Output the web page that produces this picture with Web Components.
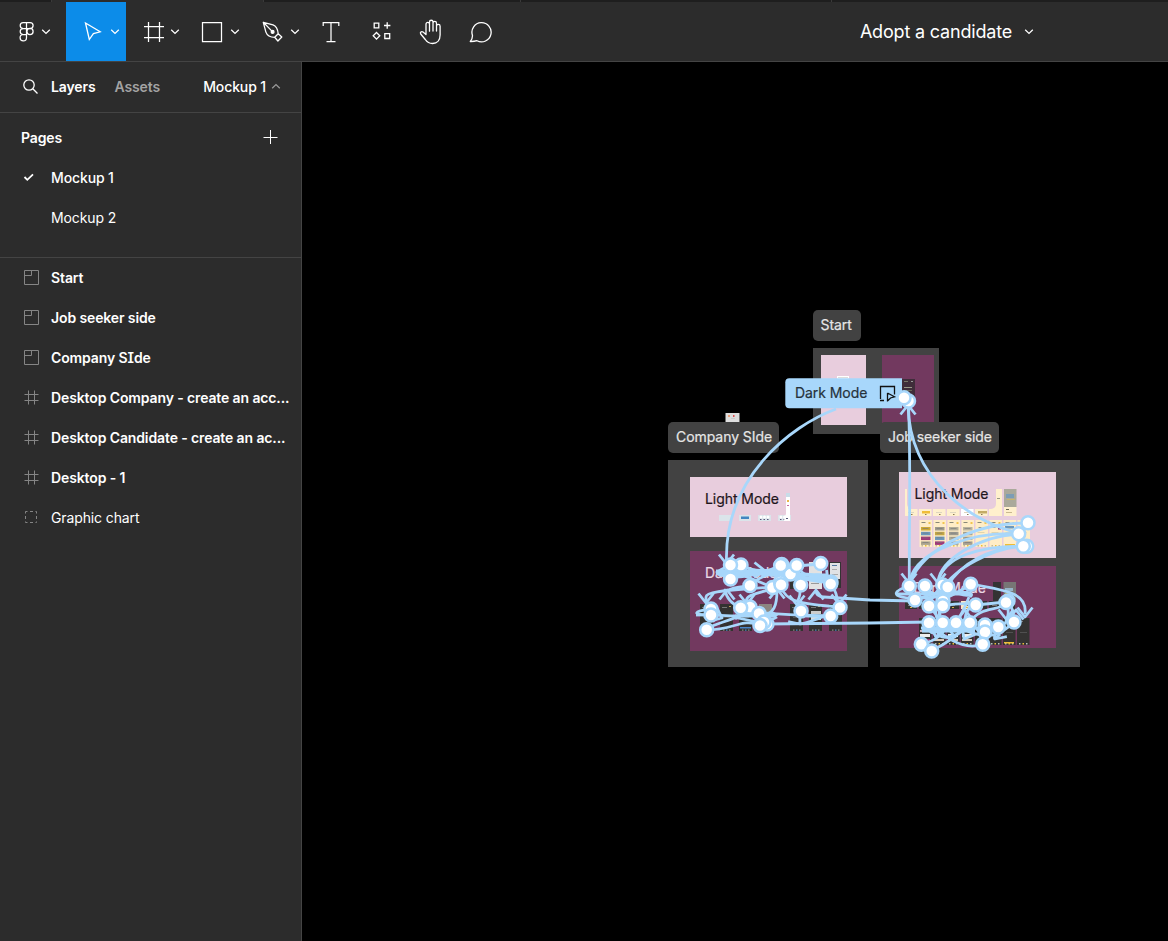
<!DOCTYPE html>
<html lang="en">
<head>
<meta charset="utf-8">
<title>Adopt a candidate</title>
<style>
html,body{margin:0;height:100%;overflow:hidden;background:#000}
body{font-family:Inter,"Liberation Sans",sans-serif;color:#fff}
</style>
</head>
<body>
<design-app></design-app>
<script>
const chev = (c='#fff') => `<svg class="chev" width="10" height="6" viewBox="0 0 10 6" fill="none" stroke="${c}" stroke-width="1.25"><path d="M1.2 .8 5 4.5 8.8 .8"/></svg>`;
const define = (name, html, after) => customElements.define(name, class extends HTMLElement {
  connectedCallback() {
    if (this.shadowRoot) return;
    this.attachShadow({mode:'open'}).innerHTML = typeof html === 'function' ? html(this) : html;
    if (after) after(this);
  }
});

const icons = {
  figma: '<svg width="16" height="22" viewBox="0 0 16 22" fill="none" stroke="#fff" stroke-width="1.25"><path d="M7.5 1.5H4.2a3 3 0 0 0 0 6h3.3zM7.5 1.5h3.6a3 3 0 0 1 0 6H7.5zM7.5 7.5H4.2a3 3 0 0 0 0 6h3.3zM7.5 13.5H4.2a3.2 3.2 0 1 0 3.3 3.2z"/><circle cx="11" cy="10.5" r="3.1"/></svg>',
  move: '<svg width="18" height="22" viewBox="0 0 18 22" fill="none" stroke="#fff" stroke-width="1.3"><path d="M1.5 2 16.2 10.8 9.4 12.6 5.3 18.5z"/></svg>',
  frame: '<svg width="22" height="22" viewBox="0 0 22 22" fill="none" stroke="#fff" stroke-width="1.25"><path d="M5.5 1v20M16.5 1v20M1 5.5h20M1 16.5h20"/></svg>',
  rect: '<svg width="22" height="22" viewBox="0 0 22 22" fill="none" stroke="#fff" stroke-width="1.25"><path d="M1.5 1.5h19v19h-19z"/></svg>',
  pen: '<svg width="22" height="22" viewBox="0 0 22 22" fill="none" stroke="#fff" stroke-width="1.3" stroke-linejoin="round"><path d="M1.3 1.3 11 3.8q4.5 1.5 5.2 8.9l-3.5 3.6q-7 0-8.8-5.2zM1.3 1.3l8.4 8.6M16.2 12.7l3.6 3.3-3.9 4-3.2-3.7"/><circle cx="10.6" cy="10.9" r="1.4" fill="#fff"/></svg>',
  text: '<svg width="18" height="22" viewBox="0 0 18 22" fill="none" stroke="#fff" stroke-width="1.25"><path d="M1.2 5V1.5h15.6V5M9 1.5v19M4.5 20.5h9"/></svg>',
  comp: '<svg width="20" height="22" viewBox="0 0 20 22" fill="none" stroke="#fff" stroke-width="1.3"><path d="M2.2 2.2h4.6v4.6H2.2zM12 4.500h6.4M15.2 1.3v6.4M4.5 11.5l3.3 3.3-3.3 3.3-3.3-3.3zM12.8 12.6h4.9v4.9h-4.9z"/></svg>',
  hand: '<svg width="24" height="26" viewBox="0 0 24 26" fill="none" stroke="#fff" stroke-width="1.3" stroke-linejoin="round" stroke-linecap="round"><path d="M7 15.3V5.2a1.75 1.75 0 0 1 3.5 0v7M10.500 12V3a1.750 1.750 0 0 1 3.5 0v9M14 12V4.200a1.750 1.750 0 0 1 3.500 0V12M17.500 12V7.200a1.750 1.750 0 0 1 3.600 0V16c0 5-2.800 8.500-7.500 8.500-4.300 0-5.700-1.600-7.300-4L1.700 15c-1-1.500.8-3.200 2.300-2L7 15.500"/></svg>',
  comment: '<svg width="24" height="22" viewBox="0 0 24 22" fill="none" stroke="#fff" stroke-width="1.3" stroke-linejoin="round"><path d="M1.300 20.500q2.500-3 2.100-6.300A9.600 9.600 0 1 1 8 19.700q-3 .9-6.700.8z"/></svg>'
};

define('tool-button', el => `
<style>
:host{display:flex;box-sizing:border-box;height:59px;padding-top:1px;flex:none;align-items:center;justify-content:center;width:${el.getAttribute('w')}px;gap:${el.getAttribute('gap')||6}px}
:host([active]){background:#0c8ce9;padding-left:11px}
:host([icon=figma]){padding-left:3px}
svg{display:block;flex:none}
</style>${icons[el.getAttribute('icon')]}${el.hasAttribute('menu') ? chev() : ''}`);

define('top-bar', `
<style>
:host{display:block;height:62px;box-sizing:border-box;background:#2c2c2c;border-bottom:1px solid #444}
.tabs{height:2px;background:#1e1e1e;display:flex}
.tabs i{box-sizing:border-box;height:2px;border-right:1px solid #3a3a3a}
.bar{display:flex;height:59px}
.tools{display:flex;width:511px;flex:none}
.title{flex:1;display:flex;justify-content:center;align-items:center;gap:12px;font-size:18px;padding-left:225px;padding-right:10px;white-space:nowrap;letter-spacing:-.18px}
</style>
<div class="tabs"><i style="width:52px"></i><i style="width:212px;background:#2c2c2c"></i><i style="width:257px"></i><i style="width:311px"></i></div>
<div class="bar"><div class="tools">
<tool-button icon="figma" w="66" gap="6" menu></tool-button>
<tool-button icon="move" w="60" gap="8" menu active></tool-button>
<tool-button icon="frame" w="70" gap="5" menu></tool-button>
<tool-button icon="rect" w="49" gap="7" menu></tool-button>
<tool-button icon="pen" w="72" gap="6" menu></tool-button>
<tool-button icon="text" w="27"></tool-button>
<tool-button icon="comp" w="75"></tool-button>
<tool-button icon="hand" w="24"></tool-button>
<tool-button icon="comment" w="76"></tool-button>
</div><div class="title"><span>Adopt a candidate</span>${chev()}</div></div>`);

const rowIcons = {
  check:'<path d="M4.500 8 7.300 10.800 13 5.400" stroke="#fff" stroke-width="1.8" transform="translate(-3 0)"/>',
  section:'<path d="M1.500 1.500h14v14h-14zM1.500 6.500h7v-5"/>',
  frame:'<path d="M5.500 1.500v14M11.500 1.500v14M1.500 5.500h14M1.500 11.500h14"/>',
  group:'<path d="M2.500 4.500V2.500h2M7 2.500h3M12.500 2.500h1v2M13.500 7v3M13.500 12.500v1h-1M10 13.500H7M4.500 13.500h-2v-1M2.500 10V7"/>',
  none:''
};
define('list-row', el => `
<style>
:host{display:flex;height:40px;box-sizing:border-box;padding-bottom:2px;align-items:center;padding-left:23px;gap:11px;font-size:14px;font-weight:400;color:#fff;white-space:nowrap}
:host([bold]){font-weight:600}
:host([medium]){font-weight:500}
svg{flex:none}
span{letter-spacing:-.12px}
::slotted(i){font-style:normal;font-feature-settings:"cv08"}
</style>
<svg width="17" height="17" viewBox="0 0 17 17" fill="none" stroke="#858585">${rowIcons[el.getAttribute('icon')]}</svg><span><slot></slot></span>`);

define('side-panel', `
<style>
:host{display:flex;flex-direction:column;background:#2c2c2c;border-right:1px solid #444;font-size:14px;letter-spacing:-.12px}
header{height:50px;box-sizing:border-box;height:51px;padding:0 20px 2px 22px;display:flex;align-items:center;border-bottom:1px solid #444;font-weight:600}
header svg{flex:none}
.assets{color:#a3a3a3;margin-left:19px}
.layers{margin-left:12px}
.page{margin-left:auto;font-weight:500;display:flex;align-items:center;gap:5px}
.page svg{transform:scaleY(-1)}
.pages{height:144px;border-bottom:1px solid #444}
.head{height:50px;box-sizing:border-box;display:flex;justify-content:space-between;align-items:center;padding:0 22px 2px 21px;font-weight:600}
.pages list-row:first-of-type{margin-top:-5px}
</style>
<header><svg width="17" height="17" viewBox="0 0 17 17" fill="none" stroke="#fff" stroke-width="1.300"><circle cx="7" cy="7" r="5.200"/><path d="m10.800 10.800 4.700 4.700"/></svg><span class="layers">Layers</span><span class="assets">Assets</span><span class="page"><span>Mockup 1</span>${chev('#999')}</span></header>
<div class="pages"><div class="head"><span>Pages</span><svg width="16" height="16" viewBox="0 0 16 16" stroke="#fff"><path d="M7.500 1v14M.500 8.500h14"/></svg></div>
<list-row icon="check" medium>Mockup 1</list-row>
<list-row icon="none">Mockup 2</list-row></div>
<list-row icon="section" bold>Start</list-row>
<list-row icon="section" bold>Job seeker side</list-row>
<list-row icon="section" bold>Company S<i>I</i>de</list-row>
<list-row icon="frame" bold>Desktop Company - create an acc...</list-row>
<list-row icon="frame" bold>Desktop Candidate - create an ac...</list-row>
<list-row icon="frame" bold>Desktop - 1</list-row>
<list-row icon="group">Graphic chart</list-row>`);

/* A rectangle on the free canvas; box="x y width height" in window pixels. */
define('canvas-box', el => {
  const [x,y,w,h] = el.getAttribute('box').split(' ').map(Number);
  return `<style>:host{position:absolute;box-sizing:border-box;left:${x-302}px;top:${y-62}px;width:${w}px;height:${h}px;background:${el.getAttribute('fill')||'none'};border-radius:${el.getAttribute('r')||0}px;display:flex;align-items:center;padding-left:${el.getAttribute('pad')||0}px;padding-bottom:1.5px;font-size:14px;white-space:nowrap;color:${el.getAttribute('ink')||'#e6e6e6'};-webkit-text-stroke:.2px;letter-spacing:-.06px}</style><slot></slot>`;
});

const R = (x,y,w,h,f) => `<rect x="${x}" y="${y}" width="${w}" height="${h}" fill="${f}"/>`;
function thumbs(){
  let s='';
  s+=R(725.500,413,14,9.500,'#dedede')+R(728,415,2,2,'#eba27c')+R(733,415,1.500,2,'#e05050')+R(731,418,4,1,'#ccc');
  s+=R(837,376,12,4,'#fff')+R(838,377,10,1,'#ddd');
  s+=R(902,379,13,24,'#3f2d3a')+R(904,381,4,1,'#776')+R(911,381,2,1,'#999')+R(904,387,8,1,'#998')+R(904,390,8,1,'#665');
  // company, light frames
  s+=R(719,515,13,6,'#dbe4ea')+R(739,515,12,6,'#dbe4ea')+R(741,516.500,8,2.500,'#4286c1');
  for(const x of [758,778]){s+=R(x,515,13,6,'#dbe4ea');for(let i=0;i<3;i++)s+=`<circle cx="${x+3+i*3.500}" cy="517" r="1.500" fill="#fff"/>`+R(x+2+i*3.500,519,1.500,1,'#557');}
  s+='<path d="M786 493h4v28h-6q0-4 2-7z" fill="#fff"/>'+R(786,493,4,4,'#c8dce8')+R(787,500,2,2,'#e9b64d')+R(787,505,2,1,'#c267a0')+R(786,518,2,1,'#557');
  // company, dark frames
  for(const [i,x] of [700,720,739,759,790,809,829].entries()){
    const mid=x===759;
    s+=R(x,604,13,mid?13:27,mid?'#8b8580':'#333230');
    if(!mid){s+=R(x+2,607,5,1,'#777')+R(x+9,606,2,1,'#b79a4d')+R(x+3,617,7,1,'#555');for(let k=0;k<3;k++)s+=R(x+3+k*3,629.500,1.500,1.200,k===1?'#4b86c8':'#888');}
    if(x===739)s+=R(x+1,627,11,1.500,'#4b86c8');
  }
  s+=R(790,562,12,27,'#343331')+R(809,562,13,27,'#e2e2e2')+R(811,564,4,1,'#888')+R(812,574,8,1,'#999')+R(813,578,4,2,'#dfb850')+R(811,583,8,1,'#999')+R(811,611,10,3,'#ccc')+R(811,616,10,4,'#ddd');
  s+=R(829,562,12,26,'#333')+R(830,563,10,16,'#e0e2e5')+R(832,565,5,1,'#5377a0')+R(832,569,5,1,'#aaa')+R(832,574,6,1,'#aaa');
  // job seeker, light frames
  s+=R(905,489,3,27,'#fff0cd');
  for(let i=0;i<7;i++){const x=905+i*14;s+=R(x,509,12.500,7,i===4?'#fff':'#fff0cd')+R(x+3,512,6,1,i===1||i===5?'#d8ae35':'#ddd5bf')+R(x+6,514,1.500,1,'#8a7852');}
  s+=R(922,511,8,2.500,'#f0bd38')+R(978,511,9,2.500,'#c4ab65')+R(990,489,12,27,'#fff0cd')+R(997,498,3,1,'#998')+R(1004,489,12.500,18,'#aaa99b')+R(1006,494,8,4,'#7c9db5')+R(1007,499,8,1,'#c7b46c')+R(1004,507,12.500,9,'#fff0cd')+R(1006,509,3,1,'#665')+R(1006,512,6,1,'#c9b890');
  for(let i=0;i<8;i++){
    const x=919.500+i*14;s+=R(x,520,12.500,27,'#ffedc6')+R(x+2,522,4,1,'#887')+R(x+9,522,2,2,'#f3c54e');
    if(i<4)for(let k=0;k<4;k++)s+=R(x+1.500,527+k*4.800,9.500,3.500,[['#cda936','#6c98bc','#a03779','#aaa38e'],['#9e9b8d','#c3a645','#6c98bc','#a03779'],['#b1ad99','#9d9b91','#b6b29c','#a5a397'],['#bab39e','#aaa593','#b2aa94','#a59f91']][i][k])+R(x+3,528+k*4.800,6,.6,'#777');
    else s+=R(x+3,527,3,1,'#998')+R(x+2,532,7,1,'#e0d4ac');
    for(let k=0;k<3;k++)s+=R(x+2+k*3.500,545,1.500,1.500,k===1?'#eebd36':'#c4b998');
  }
  s+=R(998,527,3,2.500,'#902b71')+R(1005,526,9,2.500,'#6c98bc')+R(1005,544,10,2,'#f1bd32');
  // job seeker, dark frames
  s+=R(993,582,8,27,'#333')+R(1003.500,582,12.500,18,'#777675')+R(1005,588,8,3,'#96b4c8')+R(1005,593,7,1,'#bda551');
  for(let i=0;i<8;i++){const x=905+i*14;s+=R(x,601,12,8,i===4?'#ffe8c4':'#343332')+R(x+3,605,5,1,i===5?'#efc13a':'#777')+R(x+5,607,2,1,'#d9b34d');}
  for(let i=0;i<8;i++){
    const x=919+i*14;s+=R(x,618,12.500,27,'#343332')+R(x+2,621,4,1,'#777')+R(x+3,632,7,1,'#505050');
    if(i<4)s+=R(x+1,630,10,2,'#cab5c3')+R(x+1,634,10,3,i===1?'#a4377c':'#eee')+R(x+1,639,10,2,i===0?'#a4377c':'#d8caba');
    for(let k=0;k<3;k++)s+=R(x+2+k*3.500,643,1.500,1.500,k===1?'#eebd36':'#bbb');
  }
  s+=R(1004,642,10,1.500,'#eebd36');
  return s;
}
const lines = [
 'M836 409C790 426 724 478 726.500 562','M908.500 404C911 470 909 530 909.300 582','M908 406C910 480 972 523 1019 533',
 'M1028 523C970 523 924 550 910 582','M1018 534C975 531 917 550 910 580','M1023 546C980 546 944 556 938 582','M1019 534C978 536 940 560 938 582','M1027 546C992 547 954 570 943 588','M1023 546C990 548 960 563 948 586',
 'M816 590Q816 597 824 597L870 600 915 601','M764 624 870 623 929 622',
 'M730 565C719 571 713 572 720 575 738 582 769 571 781 565','M730 579C744 562 759 580 797 566','M742 565C760 577 783 566 820 564','M730 579C750 570 775 575 830 583','M750 585C760 575 782 570 797 566','M781 565C802 588 817 571 831 584','M797 566C807 585 821 565 830 583','M772 588C790 574 814 575 831 584','M781 585C803 567 816 575 831 583','M720 574Q750 578 764 571','M754 570C770 575 817 571 828 581',
 'M716 571H760M718 573H800M735 572 772 587M774 575H828M784 579H828',
 'M772 587C741 590 706 590 706 597V602','M750 586C730 587 727 592 725 590Q727 602 741 608','M781 585C765 594 742 592 747 604','M777 590C777 605 775 613 760 618','M781 586C785 602 800 604 840 607','M800 585Q801 596 797 602','M831 584Q837 592 838 604','M711 615C690 615 694 611 711 609','M696 615H716','M706 630C735 630 741 618 760 625','M711 615C730 616 743 617 765 613','M741 608C756 625 769 606 777 616','M759 613Q789 615 831 616','M750 607C740 620 720 621 706 629','M840 607Q828 617 801 624','M733 617 767 624','M735 616H776','M801 611Q786 617 831 616','M735 619C752 606 767 625 777 617',
 'M909 586C883 594 898 602 943 596 964 590 976 592 970 597','M925 586Q937 602 947 587','M915 600Q949 586 971 596','M929 606Q960 592 971 584C1001 590 1028 591 1025 614','M947 587Q963 597 969 595','M897 594H970','M940 590V620','M943 585Q932 595 929 606','M942 606Q966 602 976 605L1006 602','M1006 602Q1011 612 1005 624','M1008 601Q1013 606 1014 622','M929 606Q937 616 943 623','M943 606C934 616 941 620 956 623','M976 605Q965 607 965 622','M969 623C982 604 1000 613 1006 602','M929 623H970','M921 628H980M922 631H975','M956 623C936 640 920 625 929 623','M943 623C926 641 956 643 970 623','M921 644Q943 640 948 622','M931 651Q954 640 970 623','M929 623Q961 653 983 644','M956 622Q965 632 976 634T985 631','M970 623Q980 628 983 644','M985 632C988 640 1004 632 1014 622','M998 627Q990 646 1000 634','M928 627C931 640 940 628 956 622','M940 594Q931 613 940 622','M969 597Q963 612 956 623'
];
const arrow=(x,y,a=0)=>`<path transform="translate(${x} ${y}) rotate(${a})" d="M-7.500-9.500 0 0 7.500-9.500"/>`;
const arrows=[[726.500,564],[909,583],[938,583],[908,405,180],[706,603],[727,590,180],[747,604],[797,605],[816,590,180],[839,604],[777,589,180],[764,570,-90],[828,582,-45],[1025,617],[1016,610,180],[1006,619],[965,610,180],[940,635],[800,624,-40],[722,618,-65],[936,637,10],[955,637],[964,639,30],[995,639,40]];
const nodes=[[741,565],[730.500,565],[730.500,579],[750,585.500],[790.500,574],[781.700,564.500],[780.700,565.500],[796.700,565.500],[820.700,563.500],[831,582],[830.700,584],[772.500,587.500],[780.500,582],[781,584.700],[800.700,585],[750,607],[740.700,607.700],[759,613.500],[767,624],[764,622],[760,625.500],[711,609],[711,615],[706.700,629.700],[801,611],[840,607.500],[830.700,616],
[909.300,586],[925,586],[942.700,585],[947.700,587],[970.700,584.300],[943,601],[915,600],[929,606],[942.700,605.700],[975.700,605],[1008,601],[1006,602.500],[929,622.700],[942.700,622.700],[956,622.700],[969.700,622.700],[985,625],[985,632],[998.300,627],[1014,622],[921.300,644.300],[931.700,651],[982.700,644.300],
[1028,522.700],[1018.700,533.700],[1026.700,546.300],[1023.300,546.300],[908.500,401],[904,397.700]];

define('canvas-art', el => `<style>:host{position:absolute;inset:0;display:block}svg{display:block}</style>
<svg width="866" height="879" viewBox="302 62 866 879">${el.getAttribute('layer')==='frames'?thumbs():
`<g fill="none" stroke="#a8d7fb" stroke-width="2.800" stroke-linejoin="round" stroke-linecap="butt">${lines.map(d=>`<path d="${d}"/>`).join('')}${arrows.map(a=>arrow(...a)).join('')}</g>
<path d="M789.300 378.300H902v30H789.300a4 4 0 0 1-4-4v-22a4 4 0 0 1 4-4z" fill="#a8d7fb"/>
<g fill="none" stroke="#111" stroke-width="1.300"><path d="M880.500 399v-12.500h14v8M880 400.500h4M887.500 393v8.500M887.500 393l7 3.800-4 1.200-2.500 2.500"/></g>
<g fill="#fff" stroke="#a8d7fb" stroke-width="2.500">${nodes.map(([x,y])=>`<circle cx="${x}" cy="${y}" r="6.500"/>`).join('')}</g>`}</svg>`);

define('design-canvas', `
<style>:host{display:block;position:relative;overflow:hidden;background:#000}</style>
<canvas-box box="813 348 126 85.500" fill="#424242"></canvas-box>
<canvas-box box="821 355 45 70" fill="#e8cddd"></canvas-box>
<canvas-box box="882 355 52 67.500" fill="#72395f"></canvas-box>
<canvas-box box="668 460 200 207" fill="#424242"></canvas-box>
<canvas-box box="690 477 157 60" fill="#e8cddd"></canvas-box>
<canvas-box box="690 551 157 100" fill="#72395f"></canvas-box>
<canvas-box box="880 460 200 207" fill="#424242"></canvas-box>
<canvas-box box="899 472 157 86" fill="#e8cddd"></canvas-box>
<canvas-box box="899 566 157 82" fill="#72395f"></canvas-box>
<canvas-art layer="frames"></canvas-art>
<canvas-box box="813 310 47.500 30.500" fill="#424242" r="5" pad="7.500">Start</canvas-box>
<canvas-box box="668 422 111 31" fill="#424242" r="5" pad="8">Company SIde</canvas-box>
<canvas-box box="880 422 119 31" fill="#424242" r="5" pad="8">Job seeker side</canvas-box>
<canvas-box box="697 485 90 29" pad="8" ink="#1e151b">Light Mode</canvas-box>
<canvas-box box="907 479 89 30" fill="#e8cddd" r="5" pad="7.500" ink="#1e151b">Light Mode</canvas-box>
<canvas-box box="697 559 90 29" pad="8" ink="#ead8e4">Dark Mode</canvas-box>
<canvas-box box="906 573 90 30" pad="7.500" ink="#ead8e4">Dark Mode</canvas-box>
<canvas-art layer="connections"></canvas-art>
<canvas-box box="785 378 100 30.500" pad="10" ink="#26323b">Dark Mode</canvas-box>`);

define('design-app', `
<style>:host{display:grid;width:1168px;height:941px;grid-template:62px 879px / 302px 866px}top-bar{grid-column:1/3}</style>
<top-bar></top-bar><side-panel></side-panel><design-canvas></design-canvas>`);
</script>
</body>
</html>
